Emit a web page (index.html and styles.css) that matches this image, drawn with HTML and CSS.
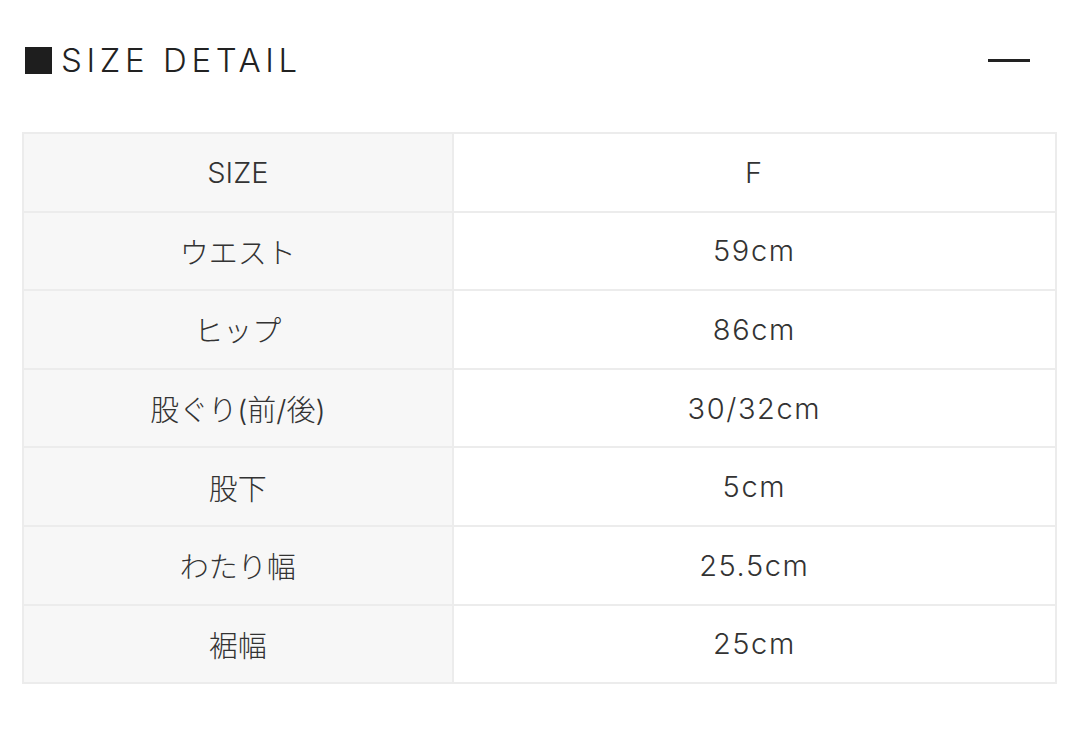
FILE: index.html
```html
<!DOCTYPE html>
<html lang="ja">
<head>
<meta charset="utf-8">
<title>SIZE DETAIL</title>
<link rel="stylesheet" href="styles.css">
</head>
<body>
<section class="size-detail">
  <header class="sd-header">
    <h2 class="sd-title"><span class="sd-mark"></span>SIZE DETAIL</h2>
    <span class="sd-toggle" aria-label="閉じる"></span>
  </header>
  <table class="sd-table">
    <tbody>
      <tr><th>SIZE</th><td>F</td></tr>
      <tr><th>ウエスト</th><td>59cm</td></tr>
      <tr><th>ヒップ</th><td>86cm</td></tr>
      <tr><th>股ぐり(前/後)</th><td>30/32cm</td></tr>
      <tr><th>股下</th><td>5cm</td></tr>
      <tr><th>わたり幅</th><td>25.5cm</td></tr>
      <tr><th>裾幅</th><td>25cm</td></tr>
    </tbody>
  </table>
</section>
</body>
</html>
```
FILE: styles.css
```css
* { box-sizing: border-box; }
html, body { margin: 0; padding: 0; background: #fff; }
body {
  font-family: "Inter", "Noto Sans CJK JP", sans-serif;
  color: #333;
}
.size-detail {
  padding: 0 23px 0 22px;
}
.sd-header {
  height: 120px;
  display: flex;
  align-items: center;
  justify-content: space-between;
  padding: 0 27px 0 3px;
}
.sd-title {
  margin: 0;
  display: flex;
  align-items: center;
  font-weight: 300;
  font-size: 33px;
  letter-spacing: 0.14em;
  color: #222;
  line-height: 1;
}
.sd-mark {
  display: inline-block;
  width: 27px;
  height: 27px;
  background: #1e1e1e;
  margin-right: 9px;
}
.sd-toggle {
  display: block;
  width: 42px;
  height: 3px;
  background: #222;
}
.sd-table {
  margin-top: 12px;
  width: 100%;
  border-collapse: collapse;
  table-layout: fixed;
  border: 2px solid #ececec;
}
.sd-table th,
.sd-table td {
  height: 78.6px;
  padding: 0;
  border: 2px solid #ececec;
  text-align: center;
  vertical-align: middle;
  font-weight: 300;
  font-size: 29px;
  color: #333;
}
.sd-table th {
  width: 41.6%;
  background: #f7f7f7;
}
.sd-table td {
  background: #fff;
  letter-spacing: 1.6px;
}
```
